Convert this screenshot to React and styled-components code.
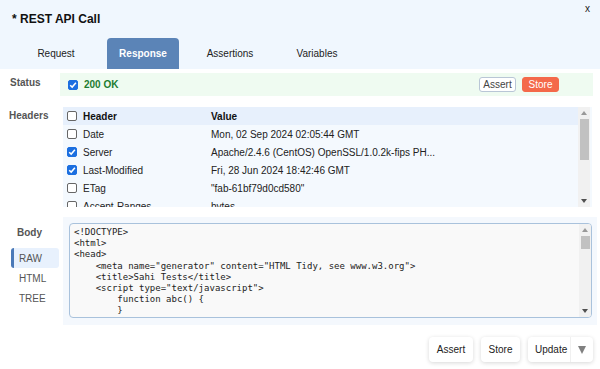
import React from 'react'
import styled, { createGlobalStyle } from 'styled-components'

const Global = createGlobalStyle`
  body {
    margin: 0;
    background: #fff;
    font-family: "Liberation Sans", Arial, sans-serif;
    font-size: 10px;
    color: #222;
  }
`

const Page = styled.div`
  width: 600px;
  height: 369px;
  position: relative;
  overflow: hidden;
`

const Top = styled.div`
  background: #f0f7fe;
  height: 69px;
  display: flex;
  flex-direction: column;
`

const Title = styled.div`
  font-size: 12px;
  font-weight: bold;
  color: #111;
  padding: 12px 0 0 12px;
  height: 38px;
  box-sizing: border-box;
`

const Close = styled.div`
  position: absolute;
  top: 3px;
  right: 10px;
  font-size: 10px;
  color: #222;
`

const Tabs = styled.div`
  display: flex;
  padding-left: 5px;
`

const Tab = styled.div`
  height: 31px;
  width: ${p => p.w}px;
  display: flex;
  align-items: center;
  justify-content: center;
  border-radius: 4px 4px 0 0;
  font-size: 10px;
  background: ${p => (p.active ? '#5b84b7' : 'transparent')};
  color: ${p => (p.active ? '#fff' : '#222')};
  font-weight: ${p => (p.active ? 'bold' : 'normal')};
`

const Row = styled.div`
  display: flex;
  align-items: flex-start;
  margin-top: ${p => p.mt}px;
`

const SideLabel = styled.div`
  width: ${p => p.w}px;
  padding-left: ${p => p.pl}px;
  padding-top: ${p => p.pt}px;
  box-sizing: border-box;
  font-weight: bold;
  color: #555;
`

const StatusBox = styled.div`
  width: 533px;
  height: 23px;
  background: #effbf1;
  display: flex;
  align-items: center;
  padding: 0 34px 0 8px;
  box-sizing: border-box;
`

const Check = styled.span`
  width: 10px;
  height: 10px;
  border-radius: 2px;
  box-sizing: border-box;
  display: inline-flex;
  align-items: center;
  justify-content: center;
  flex: none;
  background: ${p => (p.on ? '#1c6fe0' : '#fff')};
  border: 1px solid ${p => (p.on ? '#1c6fe0' : '#666')};
`

const OkText = styled.span`
  color: #1e7d32;
  font-weight: bold;
  margin-left: 6px;
  flex: 1;
`

const SmallBtn = styled.div`
  height: 15px;
  width: 37px;
  border-radius: 3px;
  display: flex;
  align-items: center;
  justify-content: center;
  font-size: 10px;
  margin-left: 6px;
  box-sizing: border-box;
  background: ${p => (p.primary ? '#f4694a' : '#fff')};
  color: ${p => (p.primary ? '#fff' : '#444')};
  border: 1px solid ${p => (p.primary ? '#f4694a' : '#b9c6d6')};
`

const Table = styled.div`
  width: 529px;
  height: 100px;
  display: flex;
  background: #f4f9fe;
`

const TableBody = styled.div`
  flex: 1;
  overflow: hidden;
`

const TRow = styled.div`
  height: 18px;
  display: grid;
  grid-template-columns: 148px 1fr;
  align-items: center;
  background: ${p => (p.head ? '#e7f0fc' : 'transparent')};
  font-weight: ${p => (p.head ? 'bold' : 'normal')};
  color: ${p => (p.head ? '#111' : '#222')};
`

const KeyCell = styled.div`
  display: flex;
  align-items: center;
  gap: 6px;
  padding-left: 4px;
`

const Scrollbar = styled.div`
  width: 12px;
  background: #f1f1f1;
  display: flex;
  flex-direction: column;
  align-items: center;
  margin-right: ${p => p.mr || 0}px;
`

const Arrow = styled.div`
  height: 12px;
  width: 12px;
  display: flex;
  align-items: center;
  justify-content: center;
  flex: none;
`

const Thumb = styled.div`
  width: 9px;
  height: ${p => p.h}px;
  background: #c1c1c1;
  flex: none;
`

const Track = styled.div`
  flex: 1;
`

const BodyLeft = styled.div`
  width: 63px;
  display: flex;
  flex-direction: column;
  padding-left: 11px;
  box-sizing: border-box;
`

const BodyTitle = styled.div`
  font-weight: bold;
  color: #555;
  padding: 10px 0 0 6px;
  height: 31px;
  box-sizing: border-box;
`

const ViewTab = styled.div`
  width: 48px;
  height: 20px;
  display: flex;
  align-items: center;
  box-sizing: border-box;
  color: #555;
  border-radius: 3px;
  background: ${p => (p.active ? '#e8f1fd' : 'transparent')};
  border-left: 3px solid ${p => (p.active ? '#4a79b8' : 'transparent')};
  padding-left: 5px;
`

const BodyPanel = styled.div`
  width: 534px;
  height: 108px;
  background: #f4f8fd;
  padding: 6px 5px 9px 6px;
  box-sizing: border-box;
`

const CodeBox = styled.div`
  height: 100%;
  border: 1px solid #a9c2dc;
  border-radius: 4px;
  background: #f9f9f9;
  display: flex;
  overflow: hidden;
`

const Code = styled.pre`
  flex: 1;
  margin: 0;
  padding: 3px 0 0 4px;
  font-family: "DejaVu Sans Mono", "Liberation Mono", monospace;
  font-size: 9px;
  line-height: 11.2px;
  color: #222;
  overflow: hidden;
`

const Footer = styled.div`
  display: flex;
  justify-content: flex-end;
  gap: 8px;
  padding: 12px 7px 0 0;
`

const FootBtn = styled.div`
  height: 25px;
  width: ${p => p.w}px;
  box-sizing: border-box;
  display: flex;
  align-items: center;
  justify-content: ${p => (p.split ? 'flex-start' : 'center')};
  padding-left: ${p => (p.split ? 7 : 0)}px;
  background: #fff;
  border-radius: 4px;
  box-shadow: 0 1px 4px rgba(0, 0, 0, 0.16);
  color: #222;
`

const Caret = styled.span`
  margin-left: auto;
  width: 22px;
  border-left: 1px solid #f0f0f0;
  height: 25px;
  display: flex;
  align-items: center;
  justify-content: center;
`

const Tick = () => (
  <svg width="8" height="8" viewBox="0 0 8 8">
    <path d="M1.2 4.2 L3.2 6.1 L6.9 1.8" stroke="#fff" strokeWidth="1.5" fill="none" />
  </svg>
)

const Box = ({ on }) => <Check on={on ? 1 : 0}>{on && <Tick />}</Check>

const Up = () => (
  <svg width="6" height="4" viewBox="0 0 6 4">
    <path d="M0 4 L3 0 L6 4 Z" fill="#999" />
  </svg>
)
const Down = () => (
  <svg width="6" height="4" viewBox="0 0 6 4">
    <path d="M0 0 L6 0 L3 4 Z" fill="#505050" />
  </svg>
)
const DropDown = () => (
  <svg width="8" height="8" viewBox="0 0 8 8">
    <path d="M0 0 L8 0 L4 8 Z" fill="#808080" />
  </svg>
)

const headers = [
  ['Date', 'Mon, 02 Sep 2024 02:05:44 GMT', false],
  ['Server', 'Apache/2.4.6 (CentOS) OpenSSL/1.0.2k-fips PH...', true],
  ['Last-Modified', 'Fri, 28 Jun 2024 18:42:46 GMT', true],
  ['ETag', '"fab-61bf79d0cd580"', false],
  ['Accept-Ranges', 'bytes', false],
]

const code = `<!DOCTYPE>
<html>
<head>
    <meta name="generator" content="HTML Tidy, see www.w3.org">
    <title>Sahi Tests</title>
    <script type="text/javascript">
        function abc() {
        }`

export default () => (
  <Page>
    <Global />
    <Top>
      <Title>* REST API Call</Title>
      <Tabs>
        <Tab w={102}>Request</Tab>
        <Tab w={72} active>Response</Tab>
        <Tab w={102}>Assertions</Tab>
        <Tab w={72}>Variables</Tab>
      </Tabs>
    </Top>
    <Close>x</Close>

    <Row mt={4}>
      <SideLabel w={60} pl={10} pt={4}>Status</SideLabel>
      <StatusBox>
        <Box on />
        <OkText>200 OK</OkText>
        <SmallBtn>Assert</SmallBtn>
        <SmallBtn primary>Store</SmallBtn>
      </StatusBox>
    </Row>

    <Row mt={11}>
      <SideLabel w={63} pl={9} pt={3}>Headers</SideLabel>
      <Table>
        <TableBody>
          <TRow head>
            <KeyCell><Box />Header</KeyCell>
            <div>Value</div>
          </TRow>
          {headers.map(([k, v, on]) => (
            <TRow key={k}>
              <KeyCell><Box on={on} />{k}</KeyCell>
              <div>{v}</div>
            </TRow>
          ))}
        </TableBody>
        <Scrollbar mr={2}>
          <Arrow><Up /></Arrow>
          <Thumb h={41} />
          <Track />
          <Arrow><Down /></Arrow>
        </Scrollbar>
      </Table>
    </Row>

    <Row mt={10}>
      <BodyLeft>
        <BodyTitle>Body</BodyTitle>
        <ViewTab active>RAW</ViewTab>
        <ViewTab>HTML</ViewTab>
        <ViewTab>TREE</ViewTab>
      </BodyLeft>
      <BodyPanel>
        <CodeBox>
          <Code>{code}</Code>
          <Scrollbar>
            <Arrow><Up /></Arrow>
            <Thumb h={13} />
            <Track />
            <Arrow><Down /></Arrow>
          </Scrollbar>
        </CodeBox>
      </BodyPanel>
    </Row>

    <Footer>
      <FootBtn w={44}>Assert</FootBtn>
      <FootBtn w={39}>Store</FootBtn>
      <FootBtn w={65} split>
        Update
        <Caret><DropDown /></Caret>
      </FootBtn>
    </Footer>
  </Page>
)
